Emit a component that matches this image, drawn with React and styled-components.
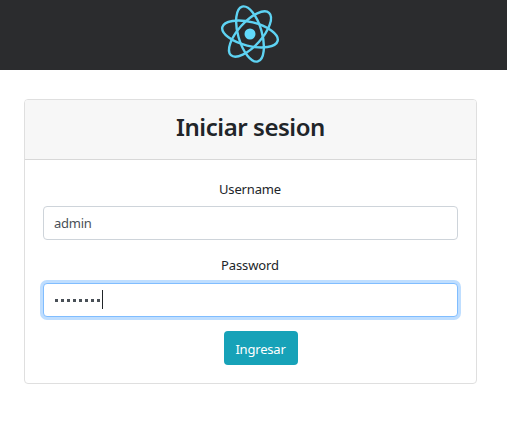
import React from "react";
import styled, { createGlobalStyle } from "styled-components";

const GlobalStyle = createGlobalStyle`
  *, *::before, *::after { box-sizing: border-box; }
  body {
    margin: 0;
    background: #fff;
    color: #212529;
    font: 400 13px/20px "Noto Sans", "Open Sans", sans-serif;
    letter-spacing: -0.25px;
  }
`;

const Page = styled.div`
  min-height: 426px;
`;

const TopBar = styled.header`
  display: flex;
  justify-content: center;
  height: 70px;
  padding: 4px 0 0 0;
  margin-bottom: 29px;
  background: #2b2c2e;
`;

const Logo = styled.svg`
  display: block;
  width: 60px;
  height: 60px;
  margin-left: -7px;
`;

const Card = styled.main`
  width: 453px;
  height: 285px;
  margin-left: 24px;
  border: 1px solid #dfdfdf;
  border-radius: 4px;
  overflow: hidden;
`;

const CardHeader = styled.div`
  height: 60px;
  padding-top: 11px;
  background: #f7f7f7;
  border-bottom: 1px solid #d8d8d8;
  text-align: center;
`;

const Title = styled.h1`
  margin: 0;
  font-size: 24px;
  font-weight: 600;
  line-height: 32px;
  letter-spacing: -0.45px;
`;

const Form = styled.form`
  display: flex;
  flex-direction: column;
  align-items: center;
  padding: 19px 18px 0;
`;

const Field = styled.div`
  display: flex;
  flex-direction: column;
  align-items: center;
  width: 100%;
  margin-bottom: ${(p) => p.$gap};
`;

const Label = styled.label`
  height: 20px;
  margin: 0 1px ${(p) => p.$gap} 0;
  letter-spacing: ${(p) => p.$tracking};
`;

const inputBox = `
  width: 100%;
  height: 34px;
  border-radius: 4px;
  background: #fff;
  color: #495057;
`;

const TextInput = styled.input`
  ${inputBox}
  padding: 0 10px;
  border: 1px solid #ced4da;
  font: inherit;
  letter-spacing: -0.25px;
  outline: none;
`;

const PasswordInput = styled.div`
  ${inputBox}
  display: flex;
  align-items: center;
  padding: 0 11px;
  border: 1px solid #80bdff;
  box-shadow: 0 0 0 3px #bfdeff;
`;

const Mask = styled.span`
  display: flex;
  gap: 3px;
`;

const Dot = styled.span`
  width: 3px;
  height: 3px;
  background: #495057;
`;

const Caret = styled.span`
  width: 1px;
  height: 19px;
  margin: 0 0 1px 2px;
  background: #212529;
`;

const Submit = styled.button`
  width: 74px;
  height: 34px;
  margin-left: 20px;
  padding: 2px 0 0;
  border: 0;
  border-radius: 4px;
  background: #17a2b8;
  color: #fff;
  font: inherit;
  letter-spacing: -0.2px;
`;

const ORBITS = [14, 74, 132];

export default function App() {
  return (
    <Page>
      <GlobalStyle />
      <TopBar>
        <Logo viewBox="-30 -30 60 60" aria-label="React">
          <circle r="5.5" fill="#61dafb" />
          <g fill="none" stroke="#5ed3f3" strokeWidth="2.4">
            {ORBITS.map((angle) => (
              <ellipse key={angle} rx="28.5" ry="11.9" transform={`rotate(${angle})`} />
            ))}
          </g>
        </Logo>
      </TopBar>
      <Card>
        <CardHeader>
          <Title>Iniciar sesion</Title>
        </CardHeader>
        <Form>
          <Field $gap="15px">
            <Label htmlFor="username" $gap="7px" $tracking="-0.15px">Username</Label>
            <TextInput id="username" defaultValue="admin" />
          </Field>
          <Field $gap="14px">
            <Label $gap="8px" $tracking="-0.1px">Password</Label>
            <PasswordInput role="textbox" aria-label="Password">
              <Mask>
                {Array.from({ length: 8 }, (_, i) => (
                  <Dot key={i} />
                ))}
              </Mask>
              <Caret />
            </PasswordInput>
          </Field>
          <Submit type="button">Ingresar</Submit>
        </Form>
      </Card>
    </Page>
  );
}
